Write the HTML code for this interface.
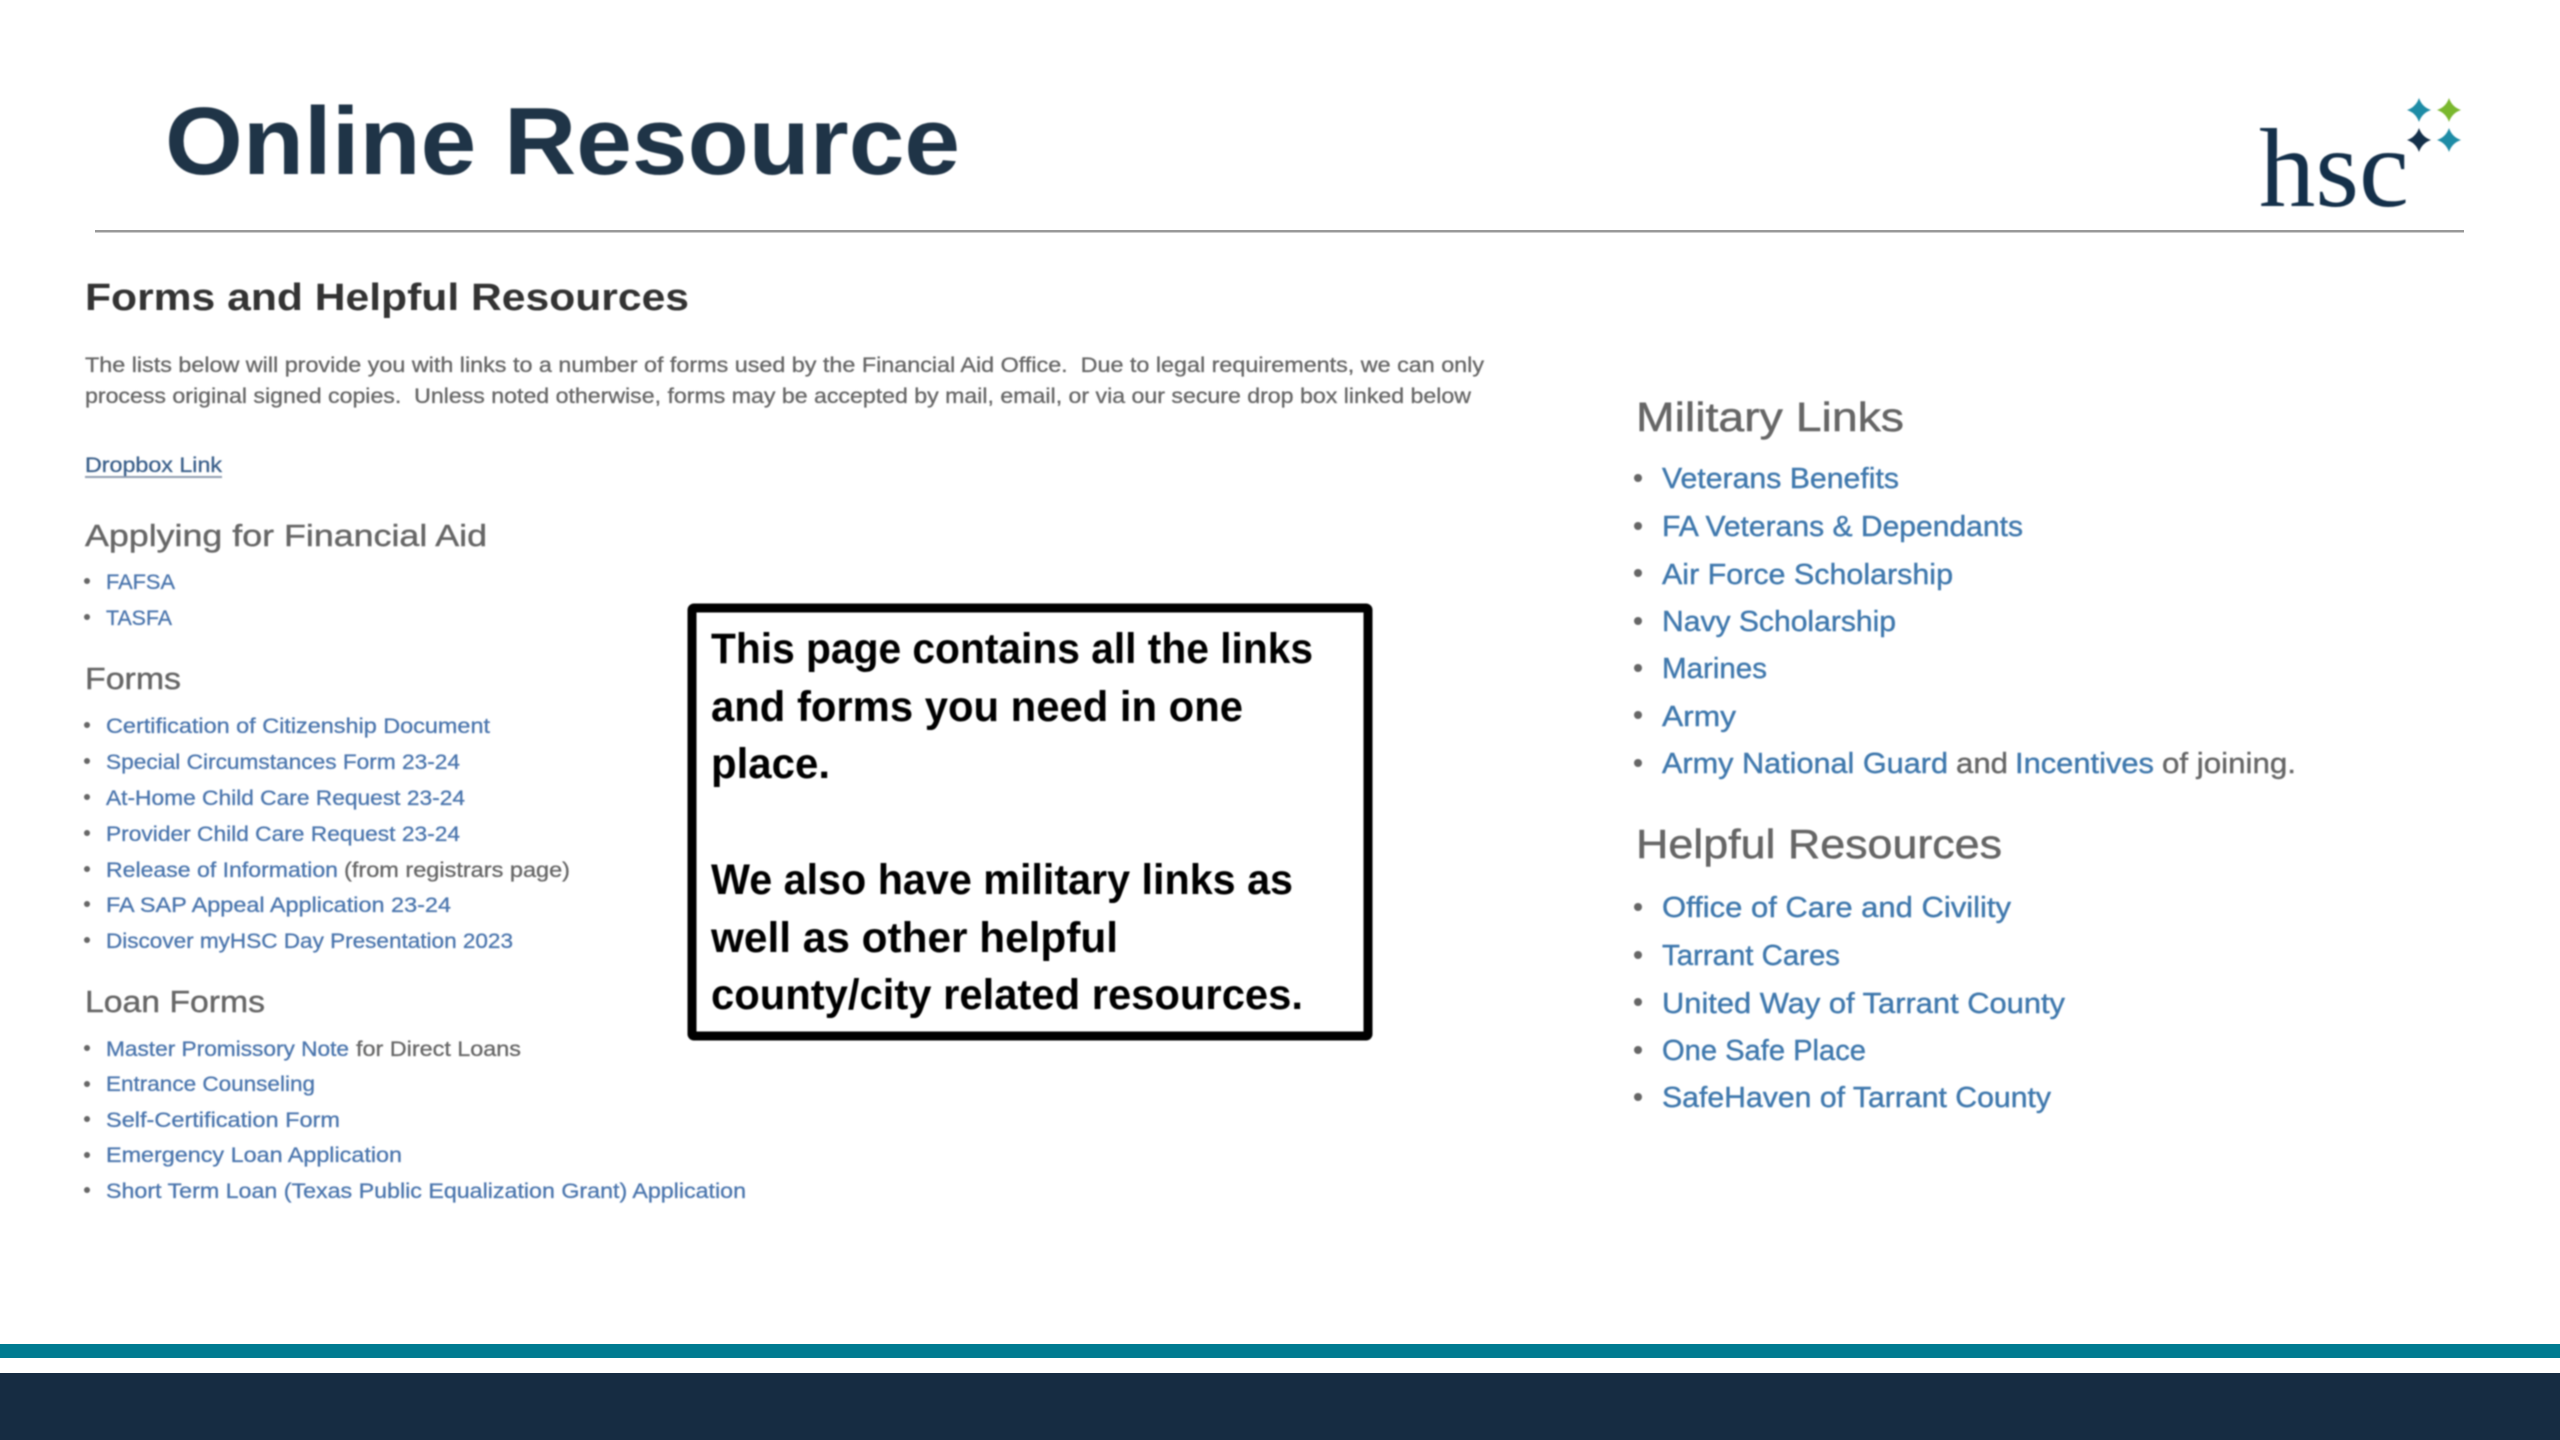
<!DOCTYPE html>
<html lang="en"><head><meta charset="utf-8"><title>Online Resource</title>
<style>
html,body{margin:0;padding:0;background:#fff;width:2560px;height:1440px;overflow:hidden}
svg{display:block}
text{font-family:"Liberation Sans",sans-serif;white-space:pre}
.s{filter:blur(.8px)}
.p{font-size:21px;fill:#666;stroke:#666;stroke-width:.3px}
.h{font-size:31px;fill:#666;stroke:#666;stroke-width:.4px}
.H{font-size:41px;fill:#666;stroke:#666;stroke-width:.5px}
.l{font-size:21px;fill:#4a75ad;stroke:#4a75ad;stroke-width:.3px}
.g{font-size:21px;fill:#666;stroke:#666;stroke-width:.3px}
.L{font-size:29px;fill:#3f78ad;stroke:#3f78ad;stroke-width:.4px}
.G{font-size:29px;fill:#666;stroke:#666;stroke-width:.4px}
.c{font-size:43px;font-weight:700;fill:#000}
</style></head><body>
<svg width="2560" height="1440" viewBox="0 0 2560 1440" xmlns="http://www.w3.org/2000/svg">
<rect width="2560" height="1440" fill="#fff"/>
<rect y="1344" width="2560" height="14" fill="#007b91"/>
<rect y="1373" width="2560" height="67" fill="#162c42"/>
<rect x="95" y="230" width="2369" height="2.5" fill="#999"/>

<g class="s">
<text x="165" y="174" font-size="96" font-weight="700" fill="#1f3447" textLength="795" lengthAdjust="spacingAndGlyphs">Online Resource</text>

<text x="2259" y="206" style="font-family:'Liberation Serif',serif" font-size="112" fill="#14304a" textLength="150" lengthAdjust="spacingAndGlyphs">hsc</text>
<path d="M2419 98Q2422 107 2431 110Q2422 113 2419 122Q2416 113 2407 110Q2416 107 2419 98Z" fill="#1e8ca6"/>
<path d="M2449 98Q2452 107 2461 110Q2452 113 2449 122Q2446 113 2437 110Q2446 107 2449 98Z" fill="#7ab82e"/>
<path d="M2419 128Q2422 137 2431 140Q2422 143 2419 152Q2416 143 2407 140Q2416 137 2419 128Z" fill="#14304a"/>
<path d="M2449 128Q2452 137 2461 140Q2452 143 2449 152Q2446 143 2437 140Q2446 137 2449 128Z" fill="#1e8ca6"/>

<text x="85" y="310" font-size="38" font-weight="700" fill="#333" textLength="604" lengthAdjust="spacingAndGlyphs">Forms and Helpful Resources</text>
<text class="p" x="85" y="372" textLength="1399" lengthAdjust="spacingAndGlyphs">The lists below will provide you with links to a number of forms used by the Financial Aid Office.  Due to legal requirements, we can only</text>
<text class="p" x="85" y="403" textLength="1386" lengthAdjust="spacingAndGlyphs">process original signed copies.  Unless noted otherwise, forms may be accepted by mail, email, or via our secure drop box linked below</text>
<text x="85" y="472" font-size="21" fill="#3a5f8a" stroke="#3a5f8a" stroke-width=".3" textLength="137" lengthAdjust="spacingAndGlyphs">Dropbox Link</text>
<rect x="85" y="476" width="137" height="2" fill="#8f9db0"/>

<text class="h" x="85" y="546" textLength="402" lengthAdjust="spacingAndGlyphs">Applying for Financial Aid</text>
<text class="l" x="106" y="589" textLength="69" lengthAdjust="spacingAndGlyphs">FAFSA</text>
<text class="l" x="106" y="625" textLength="66" lengthAdjust="spacingAndGlyphs">TASFA</text>

<text class="h" x="85" y="689" textLength="96" lengthAdjust="spacingAndGlyphs">Forms</text>
<text class="l" x="106" y="733" textLength="384" lengthAdjust="spacingAndGlyphs">Certification of Citizenship Document</text>
<text class="l" x="106" y="769" textLength="354" lengthAdjust="spacingAndGlyphs">Special Circumstances Form 23-24</text>
<text class="l" x="106" y="805" textLength="359" lengthAdjust="spacingAndGlyphs">At-Home Child Care Request 23-24</text>
<text class="l" x="106" y="841" textLength="354" lengthAdjust="spacingAndGlyphs">Provider Child Care Request 23-24</text>
<text class="l" x="106" y="877" textLength="232" lengthAdjust="spacingAndGlyphs">Release of Information</text>
<text class="g" x="344" y="877" textLength="226" lengthAdjust="spacingAndGlyphs">(from registrars page)</text>
<text class="l" x="106" y="912" textLength="345" lengthAdjust="spacingAndGlyphs">FA SAP Appeal Application 23-24</text>
<text class="l" x="106" y="948" textLength="407" lengthAdjust="spacingAndGlyphs">Discover myHSC Day Presentation 2023</text>

<text class="h" x="85" y="1012" textLength="180" lengthAdjust="spacingAndGlyphs">Loan Forms</text>
<text class="l" x="106" y="1056" textLength="243" lengthAdjust="spacingAndGlyphs">Master Promissory Note</text>
<text class="g" x="356" y="1056" textLength="165" lengthAdjust="spacingAndGlyphs">for Direct Loans</text>
<text class="l" x="106" y="1091" textLength="209" lengthAdjust="spacingAndGlyphs">Entrance Counseling</text>
<text class="l" x="106" y="1127" textLength="234" lengthAdjust="spacingAndGlyphs">Self-Certification Form</text>
<text class="l" x="106" y="1162" textLength="296" lengthAdjust="spacingAndGlyphs">Emergency Loan Application</text>
<text class="l" x="106" y="1198" textLength="640" lengthAdjust="spacingAndGlyphs">Short Term Loan (Texas Public Equalization Grant) Application</text>

<g fill="#666">
<circle cx="87" cy="581" r="3"/><circle cx="87" cy="617" r="3"/>
<circle cx="87" cy="725" r="3"/><circle cx="87" cy="761" r="3"/><circle cx="87" cy="797" r="3"/><circle cx="87" cy="833" r="3"/><circle cx="87" cy="869" r="3"/><circle cx="87" cy="904" r="3"/><circle cx="87" cy="940" r="3"/>
<circle cx="87" cy="1048" r="3"/><circle cx="87" cy="1084" r="3"/><circle cx="87" cy="1119" r="3"/><circle cx="87" cy="1155" r="3"/><circle cx="87" cy="1190" r="3"/>
<circle cx="1638" cy="478" r="4"/><circle cx="1638" cy="526" r="4"/><circle cx="1638" cy="573" r="4"/><circle cx="1638" cy="621" r="4"/><circle cx="1638" cy="668" r="4"/><circle cx="1638" cy="715" r="4"/><circle cx="1638" cy="763" r="4"/>
<circle cx="1638" cy="907" r="4"/><circle cx="1638" cy="955" r="4"/><circle cx="1638" cy="1002" r="4"/><circle cx="1638" cy="1050" r="4"/><circle cx="1638" cy="1097" r="4"/>
</g>

<text class="H" x="1636" y="431" textLength="268" lengthAdjust="spacingAndGlyphs">Military Links</text>
<text class="L" x="1662" y="488" textLength="237" lengthAdjust="spacingAndGlyphs">Veterans Benefits</text>
<text class="L" x="1662" y="536" textLength="361" lengthAdjust="spacingAndGlyphs">FA Veterans &amp; Dependants</text>
<text class="L" x="1662" y="584" textLength="291" lengthAdjust="spacingAndGlyphs">Air Force Scholarship</text>
<text class="L" x="1662" y="631" textLength="234" lengthAdjust="spacingAndGlyphs">Navy Scholarship</text>
<text class="L" x="1662" y="678" textLength="105" lengthAdjust="spacingAndGlyphs">Marines</text>
<text class="L" x="1662" y="726" textLength="74" lengthAdjust="spacingAndGlyphs">Army</text>
<text class="L" x="1662" y="773" textLength="286" lengthAdjust="spacingAndGlyphs">Army National Guard</text>
<text class="G" x="1956" y="773" textLength="52" lengthAdjust="spacingAndGlyphs">and</text>
<text class="L" x="2015" y="773" textLength="139" lengthAdjust="spacingAndGlyphs">Incentives</text>
<text class="G" x="2162" y="773" textLength="134" lengthAdjust="spacingAndGlyphs">of joining.</text>

<text class="H" x="1636" y="858" textLength="366" lengthAdjust="spacingAndGlyphs">Helpful Resources</text>
<text class="L" x="1662" y="917" textLength="349" lengthAdjust="spacingAndGlyphs">Office of Care and Civility</text>
<text class="L" x="1662" y="965" textLength="178" lengthAdjust="spacingAndGlyphs">Tarrant Cares</text>
<text class="L" x="1662" y="1013" textLength="403" lengthAdjust="spacingAndGlyphs">United Way of Tarrant County</text>
<text class="L" x="1662" y="1060" textLength="204" lengthAdjust="spacingAndGlyphs">One Safe Place</text>
<text class="L" x="1662" y="1107" textLength="389" lengthAdjust="spacingAndGlyphs">SafeHaven of Tarrant County</text>

<rect x="692" y="608" width="676" height="428" rx="2" fill="#fff" stroke="#000" stroke-width="9" stroke-linejoin="round"/>
<text class="c" x="711" y="663" textLength="602" lengthAdjust="spacingAndGlyphs">This page contains all the links</text>
<text class="c" x="711" y="721" textLength="532" lengthAdjust="spacingAndGlyphs">and forms you need in one</text>
<text class="c" x="711" y="778" textLength="119" lengthAdjust="spacingAndGlyphs">place.</text>
<text class="c" x="711" y="894" textLength="582" lengthAdjust="spacingAndGlyphs">We also have military links as</text>
<text class="c" x="711" y="952" textLength="407" lengthAdjust="spacingAndGlyphs">well as other helpful</text>
<text class="c" x="711" y="1009" textLength="592" lengthAdjust="spacingAndGlyphs">county/city related resources.</text>
</g>
</svg>
</body></html>
